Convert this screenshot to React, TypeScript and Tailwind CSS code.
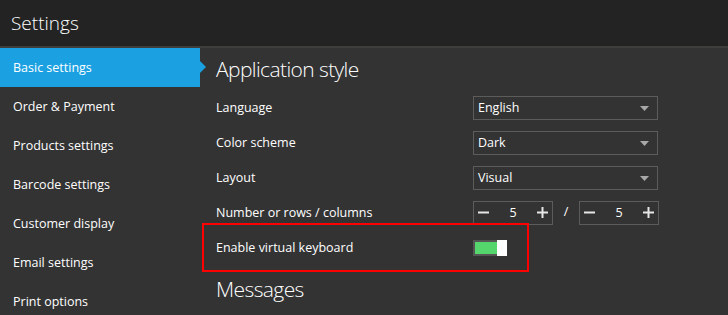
const menu = [
  "Basic settings",
  "Order & Payment",
  "Products settings",
  "Barcode settings",
  "Customer display",
  "Email settings",
  "Print options",
];

function Select({ value }: { value: string }) {
  return (
    <div className="flex h-[24px] w-[185px] items-center justify-between border border-[#5c5c5a] pl-[4px] pr-[8px] pt-[1px] text-[12.5px] text-white">
      <span>{value}</span>
      <svg width="9" height="5" viewBox="0 0 9 5">
        <path d="M0 0h9L4.5 5z" fill="#a8a8a8" />
      </svg>
    </div>
  );
}

function Spinner() {
  return (
    <div className="flex h-[24px] w-[80px] items-center justify-between border border-[#5c5c5a] px-[4px] text-[12.5px] text-white">
      <svg width="11" height="11" viewBox="0 0 11 11">
        <path d="M0 5.5h11" stroke="#e6e6e6" strokeWidth="2" />
      </svg>
      <span className="pt-[1px]">5</span>
      <svg width="11" height="11" viewBox="0 0 11 11">
        <path d="M0 5.5h11M5.5 0v11" stroke="#e6e6e6" strokeWidth="2" />
      </svg>
    </div>
  );
}

function Row({ label, children }: { label: string; children: React.ReactNode }) {
  return (
    <div className="flex h-[35px] items-center">
      <div className="w-[257px] pt-[2px] text-[12.5px] text-white">{label}</div>
      {children}
    </div>
  );
}

export default function App() {
  return (
    <div className="relative h-[315px] w-[728px] overflow-hidden bg-[#333333] font-['Segoe_UI','Open_Sans',sans-serif]">
      <div className="flex h-[48px] items-center border-b-2 border-[#3e3e3c] bg-[#232323] pl-[11px] text-[19px] font-light text-white">
        Settings
      </div>
      <div className="flex">
        <div className="w-[200px]">
          {menu.map((item, i) => (
            <div
              key={item}
              className={`relative flex h-[39px] items-center pl-[13px] pt-[2px] text-[12.5px] text-white ${i === 0 ? "bg-[#1ba1e2]" : ""}`}
            >
              {item}
              {i === 0 ? (
                <div className="absolute right-[-6px] top-[13px] h-0 w-0 border-y-[6px] border-l-[6px] border-y-transparent border-l-[#1ba1e2]" />
              ) : null}
            </div>
          ))}
        </div>
        <div className="flex-1 pl-[16px]">
          <div className="flex h-[42px] items-center pt-[2px] text-[21px] font-light tracking-[-0.6px] text-white">
            Application style
          </div>
          <Row label="Language">
            <Select value="English" />
          </Row>
          <Row label="Color scheme">
            <Select value="Dark" />
          </Row>
          <Row label="Layout">
            <Select value="Visual" />
          </Row>
          <Row label="Number or rows / columns">
            <Spinner />
            <span className="w-[26px] text-center text-[12.5px] text-white">/</span>
            <Spinner />
          </Row>
          <Row label="Enable virtual keyboard">
            <div className="flex h-[16px] items-stretch">
              <div className="w-[24px] border-2 border-r-0 border-[#555555] bg-[#54d66c]" />
              <div className="w-[10px] bg-white" />
            </div>
          </Row>
          <div className="mt-[3px] flex h-[42px] items-center pt-[2px] text-[21px] font-light tracking-[-0.6px] text-white">
            Messages
          </div>
        </div>
      </div>
      <div className="absolute left-[202px] top-[223px] h-[49px] w-[327px] border-2 border-[#ff0000]" />
    </div>
  );
}
